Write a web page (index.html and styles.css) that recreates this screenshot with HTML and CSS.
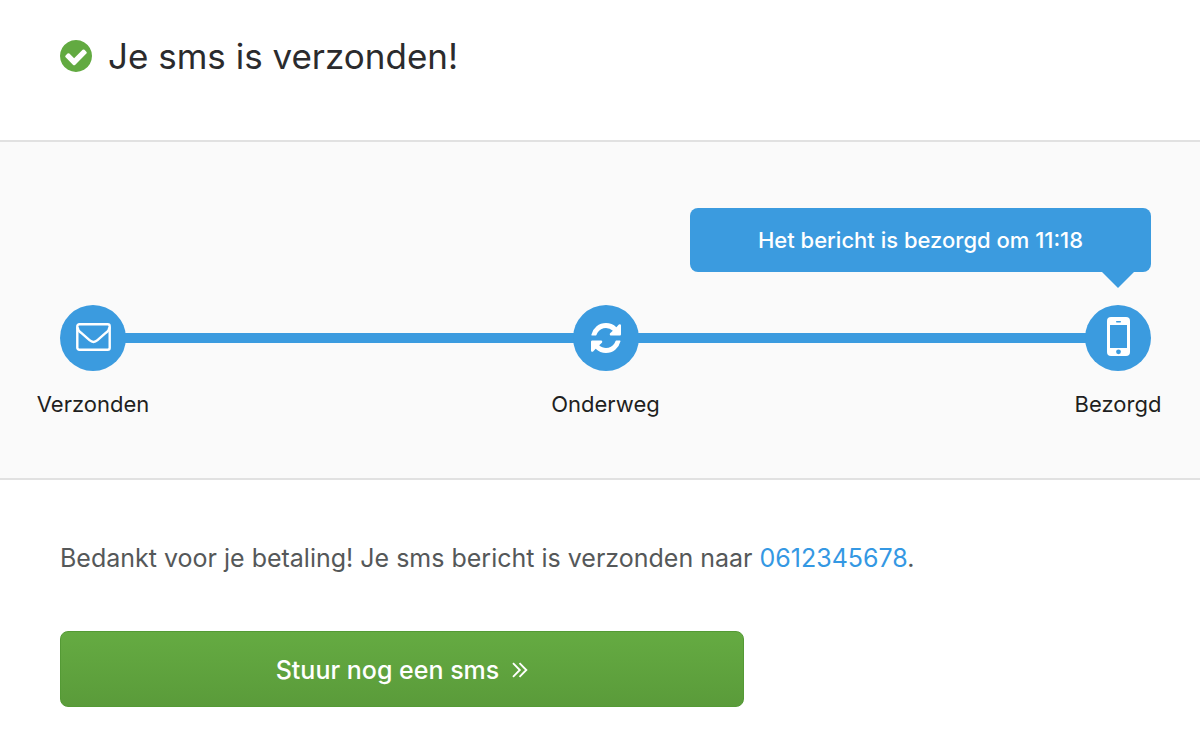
FILE: index.html
```html
<!DOCTYPE html>
<html lang="nl">
<head>
<meta charset="utf-8">
<meta name="viewport" content="width=device-width, initial-scale=1">
<title>Je sms is verzonden!</title>
<link rel="stylesheet" href="styles.css">
</head>
<body>
<header class="header">
  <svg class="header-icon" viewBox="128 128 1536 1536" aria-hidden="true"><path d="M1412 734q0-28-18-46l-91-90q-19-19-45-19t-45 19l-408 407-226-226q-19-19-45-19t-45 19l-91 90q-18 18-18 46 0 27 18 45l362 362q19 19 45 19 27 0 46-19l543-543q18-18 18-45zm252 162q0 209-103 385.5t-279.5 279.5-385.5 103-385.5-103-279.5-279.5-103-385.5 103-385.5 279.5-279.5 385.5-103 385.5 103 279.5 279.5 103 385.5z"/></svg>
  <h1 class="title">Je sms is verzonden!</h1>
</header>

<section class="status">
  <div class="bubble">Het bericht is bezorgd om 11:18</div>
  <div class="track">
    <div class="step">
      <span class="dot">
        <svg width="35" height="30" viewBox="0 0 35 30" fill="none" stroke="#fff" stroke-width="2.4" stroke-linejoin="round" aria-hidden="true"><rect x="1.3" y="1.3" width="32.4" height="25.4" rx="2"/><path d="M1.6 4.2C1.6 6.6 3.2 8.3 5 9.7L13.5 17.2Q17.5 20.7 21.5 17.2L30 9.7C31.8 8.3 33.4 6.6 33.4 4.2"/></svg>
      </span>
      <span class="label">Verzonden</span>
    </div>
    <div class="line"></div>
    <div class="step">
      <span class="dot">
        <svg width="30" height="30" viewBox="128 128 1536 1536" fill="#fff" aria-hidden="true"><path d="M1639 1056q0 5-1 7-64 268-268 434.5t-478 166.5q-146 0-282.5-55t-243.5-157l-129 129q-19 19-45 19t-45-19-19-45v-448q0-26 19-45t45-19h448q26 0 45 19t19 45-19 45l-137 137q71 66 161 102t187 36q134 0 250-65t186-179q11-17 53-117 8-23 30-23h192q13 0 22.5 9.5t9.5 22.5zm25-800v448q0 26-19 45t-45 19h-448q-26 0-45-19t-19-45 19-45l138-138q-148-137-349-137-134 0-250 65t-186 179q-11 17-53 117-8 23-30 23h-199q-13 0-22.5-9.5t-9.5-22.5v-7q65-268 270-434.5t480-166.5q146 0 284 55.5t245 156.5l130-129q19-19 45-19t45 19 19 45z"/></svg>
      </span>
      <span class="label">Onderweg</span>
    </div>
    <div class="line"></div>
    <div class="step">
      <span class="dot">
        <svg width="23" height="42" viewBox="0 0 23 42" aria-hidden="true"><rect width="23" height="39" rx="4" fill="#fff"/><rect x="3" y="8" width="17" height="23" fill="#3b9bdf"/><rect x="9" y="4" width="5" height="1.5" rx=".7" fill="#3b9bdf"/><circle cx="11.5" cy="34.8" r="2.4" fill="#3b9bdf"/></svg>
      </span>
      <span class="label">Bezorgd</span>
    </div>
  </div>
</section>

<main class="content">
  <p class="message">Bedankt voor je betaling! Je sms bericht is verzonden naar <a class="phone" href="tel:0612345678">0612345678</a>.</p>
  <button class="button" type="button">Stuur nog een sms
    <svg width="16" height="16" viewBox="0 0 16 16" fill="none" stroke="#fff" stroke-width="1.9" aria-hidden="true"><path d="M1 1.200L7.800 8L1 14.800M7.500 1.200L14.300 8L7.500 14.800"/></svg>
  </button>
</main>
</body>
</html>
```
FILE: styles.css
```css
* { box-sizing: border-box; }
body {
  margin: 0;
  background: #fff;
  color: #2b2b2d;
  font-family: Inter, "Liberation Sans", sans-serif;
}
.header {
  display: flex;
  align-items: center;
  gap: 16px;
  padding: 32px 48px 60px 60px;
}
.header-icon { width: 32px; height: 32px; fill: #62aa41; }
.title {
  margin: 0;
  font-size: 35px;
  line-height: 48px;
  font-weight: 400;
}
.status {
  padding: 66px 49px 58px 60px;
  background: #fafafa;
  border-top: 2px solid #e1e1e1;
  border-bottom: 2px solid #e1e1e1;
}
.bubble {
  position: relative;
  width: fit-content;
  min-width: 461px;
  margin: 0 0 33px auto;
  padding: 16px 24px;
  border-radius: 8px;
  background: #3b9bdf;
  color: #fff;
  font-size: 22px;
  line-height: 32px;
  font-weight: 500;
  text-align: center;
}
.bubble::after {
  content: "";
  position: absolute;
  top: 100%;
  right: 17px;
  border: 16px solid transparent;
  border-top-color: #3b9bdf;
  border-bottom: 0;
}
.track { display: flex; align-items: flex-start; }
.step {
  display: flex;
  flex-direction: column;
  align-items: center;
  gap: 17px;
  width: 66px;
}
.dot {
  display: flex;
  align-items: center;
  justify-content: center;
  width: 66px;
  height: 66px;
  border-radius: 50%;
  background: #3b9bdf;
}
.line {
  flex: 1;
  height: 10px;
  margin: 28px -2px 0;
  background: #3b9bdf;
}
.label {
  font-size: 22px;
  line-height: 32px;
  white-space: nowrap;
  color: #1f1f21;
}
.content { padding: 60px 48px 48px 60px; }
.message {
  margin: 0 0 55px;
  font-size: 25px;
  line-height: 36px;
  color: #555859;
}
.phone { color: #3498e3; text-decoration: none; }
.button {
  display: flex;
  align-items: center;
  justify-content: center;
  gap: 13px;
  width: 100%;
  max-width: 684px;
  padding: 22px 24px 20px;
  border: 1px solid #549a35;
  border-radius: 8px;
  background: linear-gradient(#65ab42, #5a9b3a) border-box;
  color: #fff;
  font: inherit;
  font-size: 25px;
  line-height: 32px;
  font-weight: 500;
  cursor: pointer;
}
```
